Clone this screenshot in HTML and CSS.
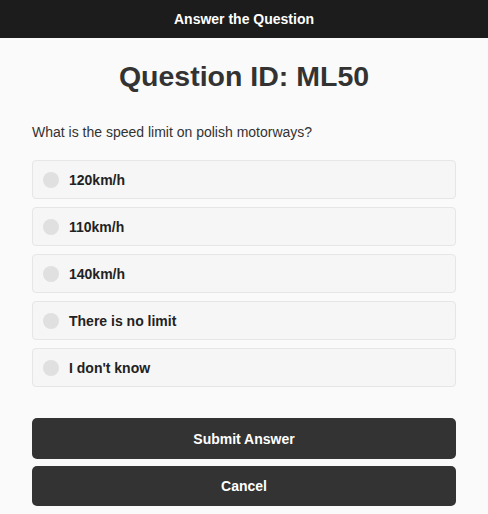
FILE: index.html
```html
<!DOCTYPE html>
<html>
<head>
<meta charset="utf-8">
<link rel="stylesheet" href="styles.css">
</head>
<body>
<header class="topbar">Answer the Question</header>
<main class="content">
  <h1 class="title">Question ID: ML50</h1>
  <p class="question">What is the speed limit on polish motorways?</p>
  <div class="options">
    <label class="option"><span class="radio"></span><span class="opt-text">120km/h</span></label>
    <label class="option"><span class="radio"></span><span class="opt-text">110km/h</span></label>
    <label class="option"><span class="radio"></span><span class="opt-text">140km/h</span></label>
    <label class="option"><span class="radio"></span><span class="opt-text">There is no limit</span></label>
    <label class="option"><span class="radio"></span><span class="opt-text">I don't know</span></label>
  </div>
  <div class="actions">
    <button class="btn">Submit Answer</button>
    <button class="btn">Cancel</button>
  </div>
</main>
</body>
</html>
```
FILE: styles.css
```css
* { box-sizing: border-box; }
html, body { margin: 0; padding: 0; }
body {
  background: #fafafa;
  font-family: "Liberation Sans", Arial, sans-serif;
  color: #333;
}
.topbar {
  height: 38px;
  background: #1c1c1c;
  color: #fff;
  font-weight: bold;
  font-size: 14px;
  display: flex;
  align-items: center;
  justify-content: center;
}
.content {
  padding: 0 32px;
}
.title {
  margin: 0;
  padding-top: 21px;
  font-size: 28.5px;
  line-height: 34px;
  text-align: center;
  color: #333;
}
.question {
  margin: 30px 0 0;
  font-size: 14px;
  line-height: 18px;
  color: #333;
}
.options {
  margin-top: 19px;
  display: flex;
  flex-direction: column;
  gap: 8px;
}
.option {
  height: 39px;
  border: 1px solid #e6e6e6;
  border-radius: 4px;
  background: #f6f6f6;
  display: flex;
  align-items: center;
  padding-left: 10px;
}
.radio {
  width: 16px;
  height: 16px;
  border-radius: 50%;
  background: #e0e0e0;
  flex: none;
}
.opt-text {
  margin-left: 10px;
  font-weight: bold;
  font-size: 14px;
  color: #222;
}
.actions {
  margin-top: 31px;
  display: flex;
  flex-direction: column;
  gap: 7px;
}
.btn {
  height: 41px;
  border: none;
  border-radius: 5px;
  background: #333;
  color: #fff;
  font-family: inherit;
  font-weight: bold;
  font-size: 14px;
}
.btn + .btn { height: 40px; }
```
